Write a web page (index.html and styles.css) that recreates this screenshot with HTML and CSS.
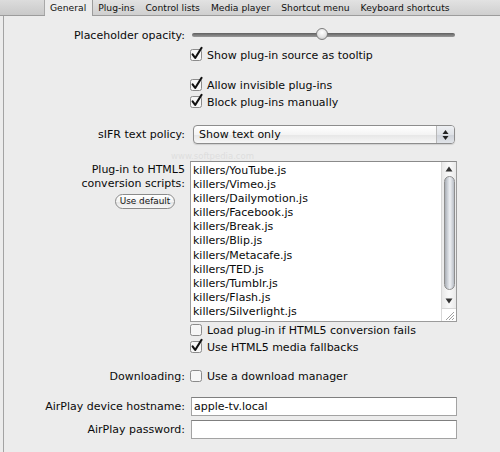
FILE: index.html
```html
<!DOCTYPE html>
<html>
<head>
<meta charset="utf-8">
<link rel="stylesheet" href="styles.css">
</head>
<body>
<div class="tabbar">
  <div class="tab-stub"></div>
  <div class="tab active">General</div>
  <div class="tab">Plug-ins</div>
  <div class="tab">Control lists</div>
  <div class="tab">Media player</div>
  <div class="tab">Shortcut menu</div>
  <div class="tab">Keyboard shortcuts</div>
</div>
<div class="panel">
  <div class="row r-opacity">
    <div class="label">Placeholder opacity:</div>
    <div class="ctrl">
      <div class="slider"><div class="knob"></div></div>
    </div>
  </div>

  <div class="row r-show">
    <div class="label"></div>
    <label class="check"><svg class="cb" viewBox="0 0 14 14" width="14" height="14"><rect x="0.5" y="2.5" width="11" height="11" rx="2" class="cbox"/><path d="M2.6 7.4 L5.2 11 L11.6 0.8" class="tick"/></svg>Show plug-in source as tooltip</label>
  </div>

  <div class="row r-allow">
    <div class="label"></div>
    <label class="check"><svg class="cb" viewBox="0 0 14 14" width="14" height="14"><rect x="0.5" y="2.5" width="11" height="11" rx="2" class="cbox"/><path d="M2.6 7.4 L5.2 11 L11.6 0.8" class="tick"/></svg>Allow invisible plug-ins</label>
  </div>
  <div class="row r-block">
    <div class="label"></div>
    <label class="check"><svg class="cb" viewBox="0 0 14 14" width="14" height="14"><rect x="0.5" y="2.5" width="11" height="11" rx="2" class="cbox"/><path d="M2.6 7.4 L5.2 11 L11.6 0.8" class="tick"/></svg>Block plug-ins manually</label>
  </div>

  <div class="row r-sifr">
    <div class="label">sIFR text policy:</div>
    <div class="select">
      <span class="select-text">Show text only</span>
      <span class="select-arrows"><svg viewBox="0 0 7 12" width="7" height="12"><path d="M3.5 1 L6.5 5 L0.5 5 Z M3.5 11 L6.5 7 L0.5 7 Z" fill="#222"/></svg></span>
    </div>
  </div>

  <div class="watermark">www.softpedia.com</div>

  <div class="row r-scripts">
    <div class="label stack">
      <div>Plug-in to HTML5</div>
      <div>conversion scripts:</div>
      <button class="btn">Use default</button>
    </div>
    <div class="listbox">
      <div class="items">
        <div>killers/YouTube.js</div>
        <div>killers/Vimeo.js</div>
        <div>killers/Dailymotion.js</div>
        <div>killers/Facebook.js</div>
        <div>killers/Break.js</div>
        <div>killers/Blip.js</div>
        <div>killers/Metacafe.js</div>
        <div>killers/TED.js</div>
        <div>killers/Tumblr.js</div>
        <div>killers/Flash.js</div>
        <div>killers/Silverlight.js</div>
      </div>
      <div class="scrollbar">
        <svg class="arrow" viewBox="0 0 8 6" width="8" height="6"><path d="M4 0.5 L7.5 5.5 L0.5 5.5 Z" fill="#333"/></svg>
        <div class="thumb"></div>
        <svg class="arrow" viewBox="0 0 8 6" width="8" height="6"><path d="M4 5.5 L7.5 0.5 L0.5 0.5 Z" fill="#333"/></svg>
        <svg class="grip" viewBox="0 0 12 12" width="12" height="12"><path d="M11 3 L3 11 M11 6 L6 11 M11 9 L9 11" stroke="#888" stroke-width="0.8"/></svg>
      </div>
    </div>
  </div>

  <div class="row r-load">
    <div class="label"></div>
    <label class="check"><svg class="cb" viewBox="0 0 14 14" width="14" height="14"><rect x="0.5" y="2.5" width="11" height="11" rx="2" class="cbox"/></svg>Load plug-in if HTML5 conversion fails</label>
  </div>
  <div class="row r-use">
    <div class="label"></div>
    <label class="check"><svg class="cb" viewBox="0 0 14 14" width="14" height="14"><rect x="0.5" y="2.5" width="11" height="11" rx="2" class="cbox"/><path d="M2.6 7.4 L5.2 11 L11.6 0.8" class="tick"/></svg>Use HTML5 media fallbacks</label>
  </div>

  <div class="row r-dl">
    <div class="label">Downloading:</div>
    <label class="check"><svg class="cb" viewBox="0 0 14 14" width="14" height="14"><rect x="0.5" y="2.5" width="11" height="11" rx="2" class="cbox"/></svg>Use a download manager</label>
  </div>

  <div class="row r-host">
    <div class="label">AirPlay device hostname:</div>
    <div class="input">apple-tv.local</div>
  </div>
  <div class="row r-pass">
    <div class="label">AirPlay password:</div>
    <div class="input"></div>
  </div>
</div>
</body>
</html>
```

FILE: styles.css
```css
html, body {
  margin: 0;
  padding: 0;
}
body {
  width: 500px;
  height: 452px;
  overflow: hidden;
  background: #ececec;
  font-family: "DejaVu Sans", "Noto Sans", sans-serif;
  font-size: 11px;
  color: #0a0a0a;
}

/* tabs */
.tabbar {
  display: flex;
  height: 15px;
  background: linear-gradient(#e2e2e2, #cfcfcf);
  border-bottom: 1px solid #9c9c9c;
  font-size: 9.2px;
  line-height: 15px;
}
.tab-stub {
  width: 44px;
  border-right: 1px solid #a8a8a8;
  background: linear-gradient(#dcdcdc, #c9c9c9);
}
.tab {
  padding: 0 5.5px;
  color: #111;
  white-space: nowrap;
}
.tab.active {
  background: #ececec;
  border-right: 1px solid #9c9c9c;
  margin-bottom: -1px;
  height: 16px;
  padding: 0 5.5px 0 5px;
}

/* panel */
.panel {
  margin-left: 3px;
  border-left: 1px solid #a3a3a3;
  height: 436px;
  padding-top: 10px;
  box-sizing: border-box;
  display: flex;
  flex-direction: column;
}
.row {
  display: grid;
  grid-template-columns: 181px 267px;
  column-gap: 5px;
  align-items: center;
}
.label {
  text-align: right;
  white-space: nowrap;
}

.r-opacity { height: 18px; }
.r-show { height: 17px; margin-top: 3px; }
.r-allow { height: 17px; margin-top: 13px; }
.r-block { height: 17px; }
.r-sifr { height: 19px; margin-top: 14px; }
.r-scripts { margin-top: 0; align-items: start; }
.r-load { height: 17px; margin-top: 0; }
.r-use { height: 17px; }
.r-dl { height: 17px; margin-top: 12px; }
.r-host { height: 19px; margin-top: 12px; }
.r-pass { height: 19px; margin-top: 4px; }

/* slider */
.slider {
  position: relative;
  margin-left: 2px;
  width: 263px;
  height: 4px;
  border-radius: 2px;
  background: linear-gradient(#5f5f5f, #9a9a9a);
}
.knob {
  position: absolute;
  left: 124px;
  top: -5px;
  width: 12px;
  height: 12px;
  box-sizing: border-box;
  border-radius: 50%;
  border: 1px solid #7d7d7d;
  background: radial-gradient(circle at 50% 35%, #ffffff 0%, #e4e4e4 55%, #b9b9b9 100%);
}

/* checkbox */
.check {
  display: flex;
  align-items: center;
  white-space: nowrap;
}
.cb {
  flex: none;
  margin-right: 3px;
  margin-top: -3px;
  overflow: visible;
}
.cbox {
  fill: #f6f6f6;
  stroke: #8b8b8b;
  stroke-width: 1;
}
.tick {
  fill: none;
  stroke: #111;
  stroke-width: 2.1;
  stroke-linecap: round;
  stroke-linejoin: round;
}

/* select */
.select {
  margin-left: 3px;
  width: 262px;
  height: 19px;
  box-sizing: border-box;
  border: 1px solid #8d8d8d;
  border-radius: 4px;
  background: linear-gradient(#ffffff 0%, #f4f4f4 50%, #e6e6e6 51%, #f7f7f7 100%);
  display: flex;
  align-items: center;
  box-shadow: 0 1px 1px rgba(0,0,0,0.12);
  overflow: hidden;
}
.select-text {
  flex: 1;
  padding-left: 5px;
}
.select-arrows {
  width: 17px;
  height: 100%;
  border-left: 1px solid #b8b8b8;
  background: linear-gradient(#eef0f3 0%, #dfe2e7 50%, #cdd1d8 51%, #e1e4e9 100%);
  display: flex;
  align-items: center;
  justify-content: center;
}

/* watermark */
.watermark {
  height: 17px;
  line-height: 10px;
  padding-top: 7px;
  box-sizing: border-box;
  margin-left: 167px;
  font-size: 8.5px;
  color: #dedede;
}

/* scripts */
.stack {
  display: flex;
  flex-direction: column;
  align-items: flex-end;
  padding-top: 2px;
  line-height: 14px;
}
.btn {
  margin-top: 3px;
  margin-right: 10px;
  width: 60px;
  height: 15px;
  padding: 0;
  font-family: inherit;
  font-size: 8.9px;
  line-height: 13px;
  color: #111;
  border: 1px solid #8a8a8a;
  border-radius: 8px;
  background: linear-gradient(#ffffff 0%, #f3f3f3 50%, #e4e4e4 51%, #f6f6f6 100%);
}
.listbox {
  width: 267px;
  height: 161px;
  box-sizing: border-box;
  border: 1px solid #9b9b9b;
  border-top-color: #8a8a8a;
  background: #fff;
  display: flex;
}
.items {
  flex: 1;
  padding: 2px 0 0 2px;
  line-height: 14.1px;
}
.scrollbar {
  width: 14px;
  border-left: 1px solid #d8d8d8;
  display: flex;
  flex-direction: column;
  align-items: center;
  background: linear-gradient(90deg, #e9e9e9, #fafafa 50%, #e9e9e9);
}
.arrow {
  margin-top: 4px;
  flex: none;
}
.thumb {
  margin-top: 4px;
  width: 11px;
  height: 114px;
  box-sizing: border-box;
  border-radius: 6px;
  border: 1px solid #8e8e8e;
  background: linear-gradient(90deg, #a9aeb5 0%, #d6dae0 35%, #eef0f3 55%, #b9bec6 100%);
  margin-bottom: 4px;
}
.grip {
  margin-top: auto;
  align-self: flex-end;
  border-top: 1px solid #d8d8d8;
  background: #fff;
  width: 14px;
}

/* inputs */
.input {
  margin-left: 1px;
  width: 266px;
  height: 19px;
  box-sizing: border-box;
  border: 1px solid #a3a3a3;
  border-top-color: #7f7f7f;
  background: #fff;
  padding-left: 2px;
  line-height: 17px;
}
```
